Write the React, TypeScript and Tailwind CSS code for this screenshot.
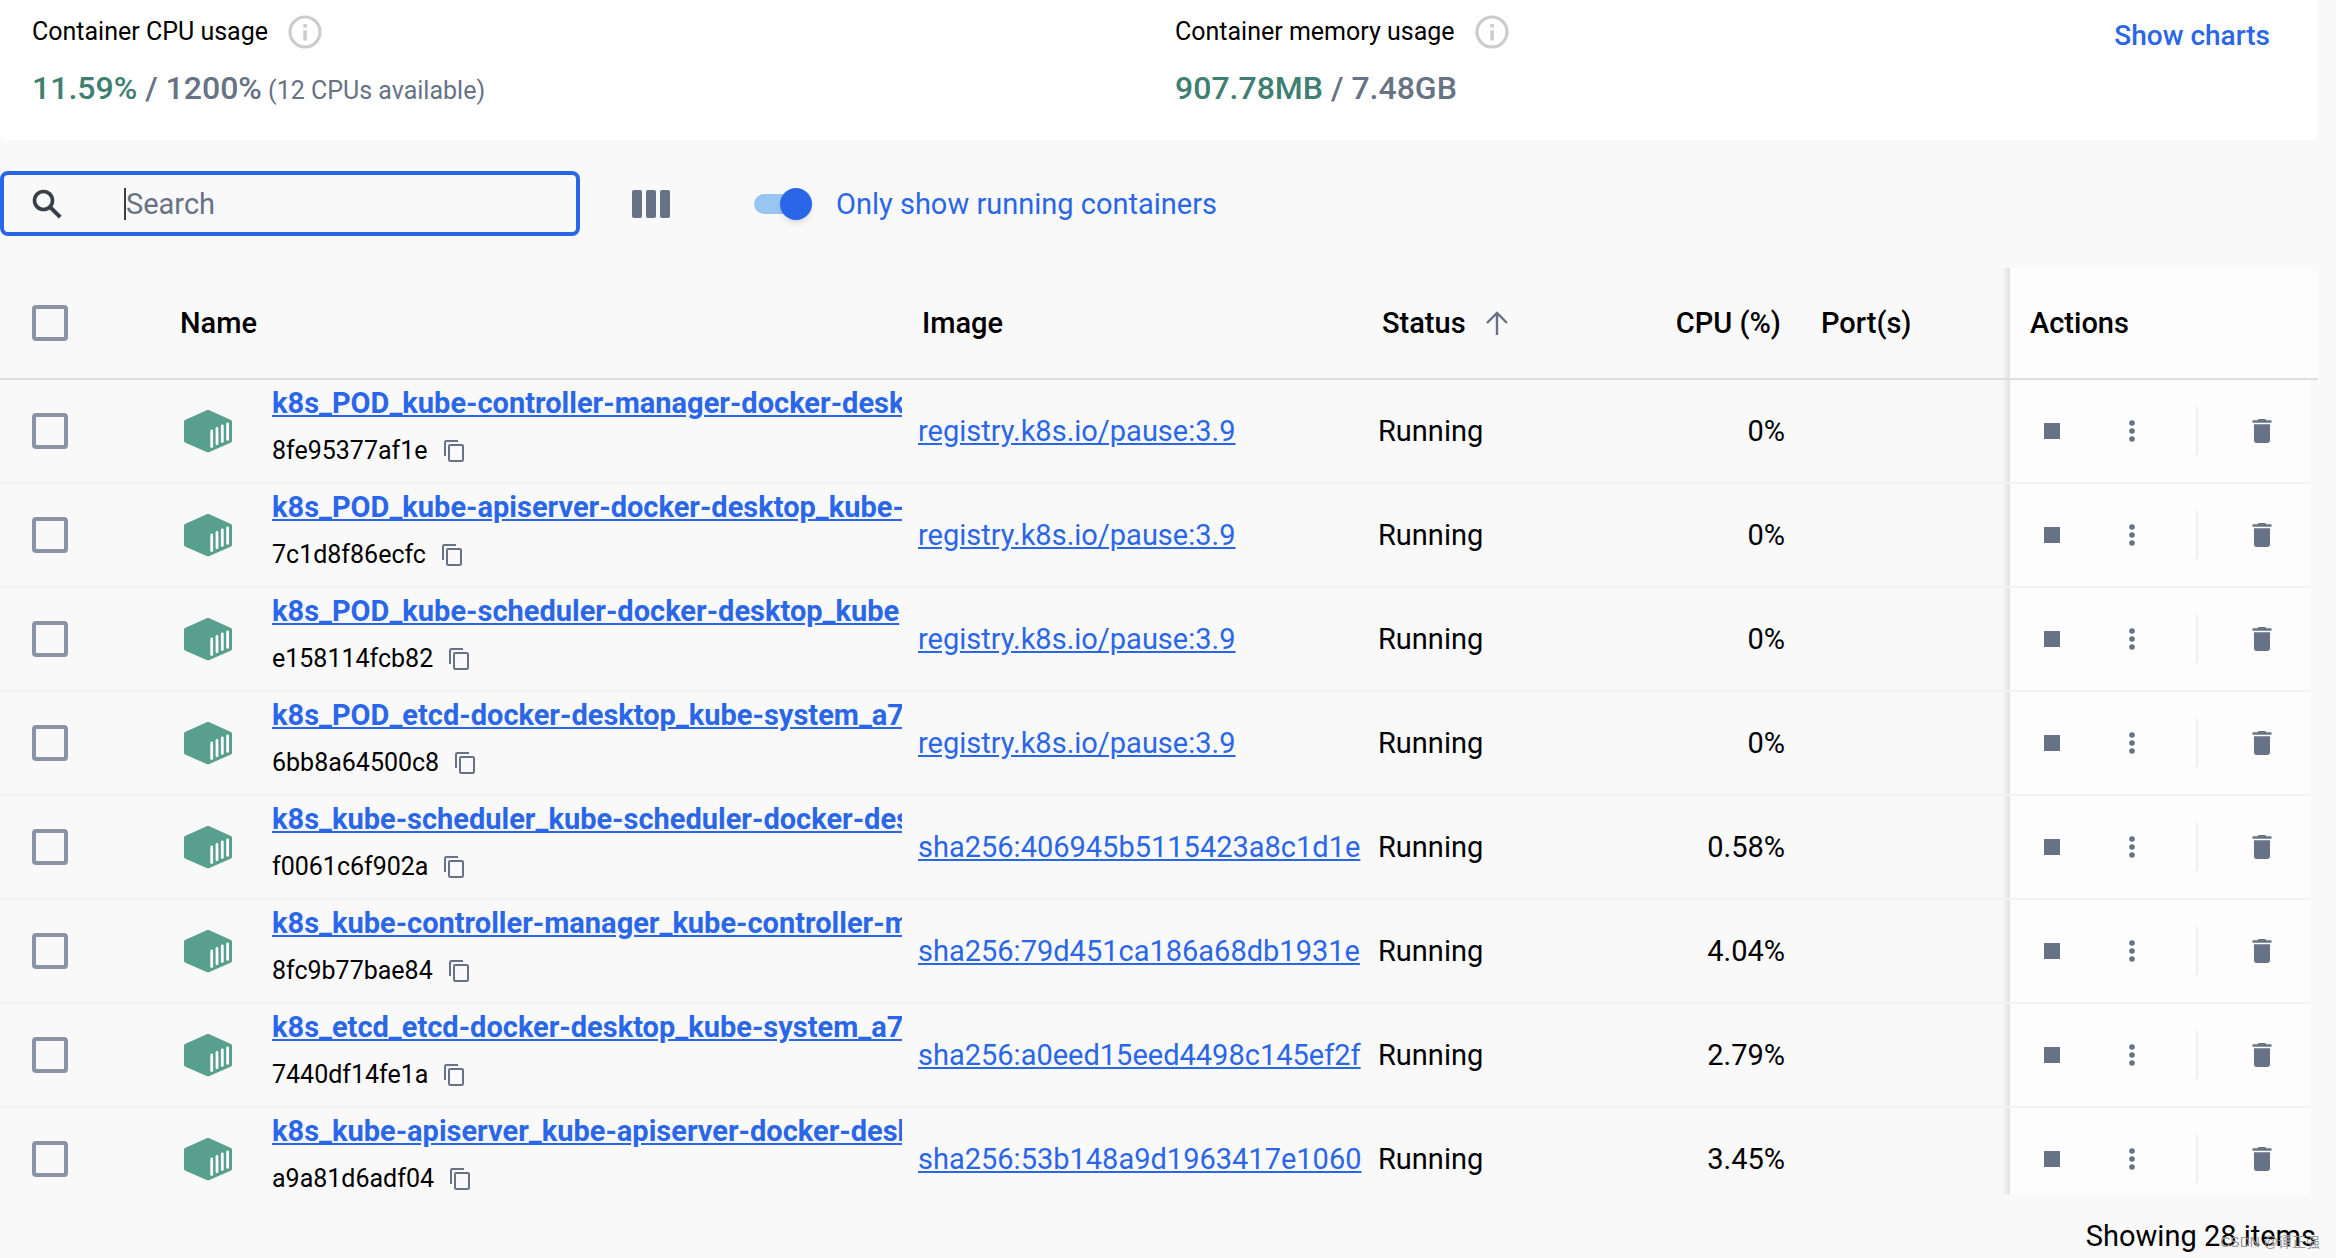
import { useState } from "react";

type Container = {
    id: string;
    name: string;
    image: string;
    cpu: string;
};

const containers: Container[] = [
    { id: "8fe95377af1e", name: "k8s_POD_kube-controller-manager-docker-desk", image: "registry.k8s.io/pause:3.9", cpu: "0%" },
    { id: "7c1d8f86ecfc", name: "k8s_POD_kube-apiserver-docker-desktop_kube-", image: "registry.k8s.io/pause:3.9", cpu: "0%" },
    { id: "e158114fcb82", name: "k8s_POD_kube-scheduler-docker-desktop_kube", image: "registry.k8s.io/pause:3.9", cpu: "0%" },
    { id: "6bb8a64500c8", name: "k8s_POD_etcd-docker-desktop_kube-system_a7", image: "registry.k8s.io/pause:3.9", cpu: "0%" },
    { id: "f0061c6f902a", name: "k8s_kube-scheduler_kube-scheduler-docker-des", image: "sha256:406945b5115423a8c1d1e", cpu: "0.58%" },
    { id: "8fc9b77bae84", name: "k8s_kube-controller-manager_kube-controller-m", image: "sha256:79d451ca186a68db1931e", cpu: "4.04%" },
    { id: "7440df14fe1a", name: "k8s_etcd_etcd-docker-desktop_kube-system_a7", image: "sha256:a0eed15eed4498c145ef2f", cpu: "2.79%" },
    { id: "a9a81d6adf04", name: "k8s_kube-apiserver_kube-apiserver-docker-desk", image: "sha256:53b148a9d1963417e1060", cpu: "3.45%" },
];

function InfoIcon() {
    return (
        <svg viewBox="0 0 34 34" className="size-[34px]" aria-hidden="true">
            <circle cx="17" cy="17" r="15" fill="none" stroke="#cccccc" strokeWidth="3.2" />
            <path d="M15.3 15.2h3.6v10.2h-3.6zM15.3 9h3.6v3.4h-3.6z" fill="#cccccc" />
        </svg>
    );
}

function ContainerIcon() {
    return (
        <svg viewBox="0 0 48 44" className="h-11 w-12 shrink-0" aria-hidden="true">
            <path
                d="M24.8 1.1 47 10.9q1 .5 1 1.6v19.3q0 1.1-1 1.6L24.8 43.2q-.8.3-1.6 0L1 33.4q-1-.5-1-1.6V12.5q0-1.1 1-1.6L23.2 1.1q.8-.3 1.6 0z"
                fill="#599f8e"
            />
            <path d="M27.7 22v15.6M33 19.4v15.4M38.3 17v15.4M43.6 15v15.4" stroke="#fff" strokeWidth="2.8" strokeLinecap="round" />
        </svg>
    );
}

function CopyIcon() {
    return (
        <svg viewBox="0 0 20 22" className="h-[22px] w-5" fill="none" stroke="#677285" strokeWidth="2" aria-hidden="true">
            <path d="M14 1H2.2Q1 1 1 2.2V16" />
            <rect x="5" y="5" width="14" height="16" rx="1.2" />
        </svg>
    );
}

function Checkbox({ label }: { label: string }) {
    return (
        <input
            type="checkbox"
            aria-label={label}
            className="block size-9 appearance-none rounded border-4 border-[#8b93a5] bg-transparent checked:bg-[#2a66e8]"
        />
    );
}

function Stat({ label, used, total, note }: { label: string; used: string; total: string; note?: string }) {
    return (
        <div className="flex-1">
            <div className="flex h-16 items-center gap-5 text-[25px] text-black">
                {label}
                <InfoIcon />
            </div>
            <p className="text-[32px] leading-12 font-medium text-[#677285]">
                <span className="text-[#3f7f72]">{used}</span> / {total}
                {note && <span className="text-[25px] font-normal"> {note}</span>}
            </p>
        </div>
    );
}

function ContainerRow({ item }: { item: Container }) {
    return (
        <tr className="h-[104px]">
            <td className="border-b-2 border-[#f3f3f3] pl-8">
                <Checkbox label={`Select ${item.id}`} />
            </td>
            <td className="border-b-2 border-[#f3f3f3] pr-4">
                <div className="flex items-center gap-10 pl-1">
                    <ContainerIcon />
                    <div className="flex min-w-0 flex-1 flex-col gap-2 pb-2">
                        <a href="#container" className="block overflow-hidden font-bold whitespace-nowrap text-[#2a66e8] underline">
                            {item.name}
                        </a>
                        <div className="flex h-10 items-center gap-4 text-[25px]">
                            {item.id}
                            <button type="button" aria-label="Copy container ID">
                                <CopyIcon />
                            </button>
                        </div>
                    </div>
                </div>
            </td>
            <td className="border-b-2 border-[#f3f3f3] pr-4">
                <a href="#image" className="block overflow-hidden whitespace-nowrap text-[#2a66e8] underline">
                    {item.image}
                </a>
            </td>
            <td className="border-b-2 border-[#f3f3f3]">Running</td>
            <td className="border-b-2 border-[#f3f3f3] text-right">{item.cpu}</td>
            <td className="border-b-2 border-[#f3f3f3]" />
            <td className="relative border-b-2 border-[#f3f3f3] bg-[#fdfdfd] pl-[22px] before:absolute before:inset-y-0 before:right-full before:w-2 before:bg-linear-to-l before:from-black/10 before:to-transparent">
                <div className="flex items-center text-[#677285]">
                    <button type="button" aria-label="Stop" className="flex w-10 justify-center">
                        <span className="size-4 bg-current" />
                    </button>
                    <button type="button" aria-label="More actions" className="ml-10 flex w-10 justify-center">
                        <svg viewBox="0 0 6 22" className="h-[22px] w-1.5" fill="currentColor" aria-hidden="true">
                            <circle cx="3" cy="3" r="2.8" />
                            <circle cx="3" cy="11" r="2.8" />
                            <circle cx="3" cy="19" r="2.8" />
                        </svg>
                    </button>
                    <span className="ml-11 h-12 w-0.5 bg-[#eeeeee]" />
                    <button type="button" aria-label="Delete" className="ml-11 flex w-10 justify-center">
                        <svg viewBox="0 0 20 24" className="h-6 w-5" fill="currentColor" aria-hidden="true">
                            <path d="M.5 1.3h5L6.8 0h6.4l1.3 1.3h5v2.5H.5zM2 5.3h16v16q0 2.7-2.7 2.7H4.7Q2 24 2 21.3z" />
                        </svg>
                    </button>
                </div>
            </td>
            <td />
        </tr>
    );
}

export default function App() {
    const [runningOnly, setRunningOnly] = useState(true);

    return (
        <div className="relative flex h-screen flex-col overflow-hidden bg-[#f9f9f9] font-[Roboto,'Liberation_Sans',sans-serif] text-[29px] leading-10 text-black">
            <section className="mr-[18px] flex h-[140px] shrink-0 items-start rounded-b-lg bg-white px-8">
                <Stat label="Container CPU usage" used="11.59%" total="1200%" note="(12 CPUs available)" />
                <div className="flex flex-1 items-start justify-between pl-8">
                    <Stat label="Container memory usage" used="907.78MB" total="7.48GB" />
                    <button type="button" className="mt-4 mr-4 text-[28px] font-medium text-[#2a66e8]">
                        Show charts
                    </button>
                </div>
            </section>

            <div className="flex shrink-0 items-center pt-[31px] pb-8">
                <label className="flex h-[65px] w-[580px] items-center rounded-lg border-4 border-[#2a66e8] pl-7">
                    <svg viewBox="0 0 30 30" className="size-[30px] shrink-0" fill="none" stroke="#393f49" aria-hidden="true">
                        <circle cx="11.5" cy="11.5" r="9" strokeWidth="3.6" />
                        <path d="m18 18 10.2 10.2" strokeWidth="4" />
                    </svg>
                    <span className="ml-[62px] h-8 w-0.5 shrink-0 bg-[#393f49]" />
                    <input type="text" aria-label="Search" placeholder="Search" className="w-full min-w-0 bg-transparent outline-none placeholder:text-[#677285]" />
                </label>
                <button type="button" aria-label="Choose columns" className="ml-[52px] flex gap-1">
                    <span className="h-7 w-[10px] rounded-xs bg-[#677285]" />
                    <span className="h-7 w-[10px] rounded-xs bg-[#677285]" />
                    <span className="h-7 w-[10px] rounded-xs bg-[#677285]" />
                </button>
                <label className="ml-[84px] flex items-center gap-6 text-[#2a66e8]">
                    <input
                        type="checkbox"
                        role="switch"
                        checked={runningOnly}
                        onChange={(e) => setRunningOnly(e.target.checked)}
                        className="relative h-5 w-[58px] appearance-none rounded-full bg-[#98c6f1] before:absolute before:-top-1.5 before:left-0 before:size-8 before:rounded-full before:bg-[#2a66e8] before:shadow-md checked:before:left-[26px]"
                    />
                    Only show running containers
                </label>
            </div>

            <div className="mr-[18px] min-h-0 flex-1 overflow-hidden">
                <table className="w-full table-fixed border-separate border-spacing-0 text-left">
                    <colgroup>
                        <col className="w-[180px]" />
                        <col />
                        <col className="w-[460px]" />
                        <col className="w-[182px]" />
                        <col className="w-[225px]" />
                        <col className="w-[225px]" />
                        <col className="w-[300px]" />
                        <col className="w-2" />
                    </colgroup>
                    <thead>
                        <tr className="h-28">
                            <th className="border-b-2 border-[#dedede] pl-8">
                                <Checkbox label="Select all" />
                            </th>
                            <th className="border-b-2 border-[#dedede] font-medium">Name</th>
                            <th className="border-b-2 border-[#dedede] pl-1 font-medium">Image</th>
                            <th className="border-b-2 border-[#dedede] pl-1 font-medium">
                                <button type="button" className="flex items-center gap-5">
                                    Status
                                    <svg viewBox="0 0 22 24" className="h-6 w-[22px]" fill="none" stroke="#677285" strokeWidth="2.4" aria-hidden="true">
                                        <path d="M11 24V1.8M1 12 11 2l10 10" />
                                    </svg>
                                </button>
                            </th>
                            <th className="border-b-2 border-[#dedede] pr-1 text-right font-medium">CPU (%)</th>
                            <th className="border-b-2 border-[#dedede] pl-9 font-medium">Port(s)</th>
                            <th
                                colSpan={2}
                                className="relative rounded-tr-lg border-b-2 border-[#dedede] bg-[#fdfdfd] pl-5 font-medium before:absolute before:inset-y-0 before:right-full before:w-2 before:bg-linear-to-l before:from-black/10 before:to-transparent"
                            >
                                Actions
                            </th>
                        </tr>
                    </thead>
                    <tbody>
                        {containers.map((item) => (
                            <ContainerRow key={item.id} item={item} />
                        ))}
                    </tbody>
                </table>
            </div>

            <footer className="flex h-16 shrink-0 items-center justify-end pt-5 pr-5">Showing 28 items</footer>
            <span className="absolute right-4 bottom-2 font-['Liberation_Sans','Noto_Sans_CJK_SC',sans-serif] text-sm leading-4 text-[#999999]">
                CSDN @谭正强
            </span>
        </div>
    );
}
